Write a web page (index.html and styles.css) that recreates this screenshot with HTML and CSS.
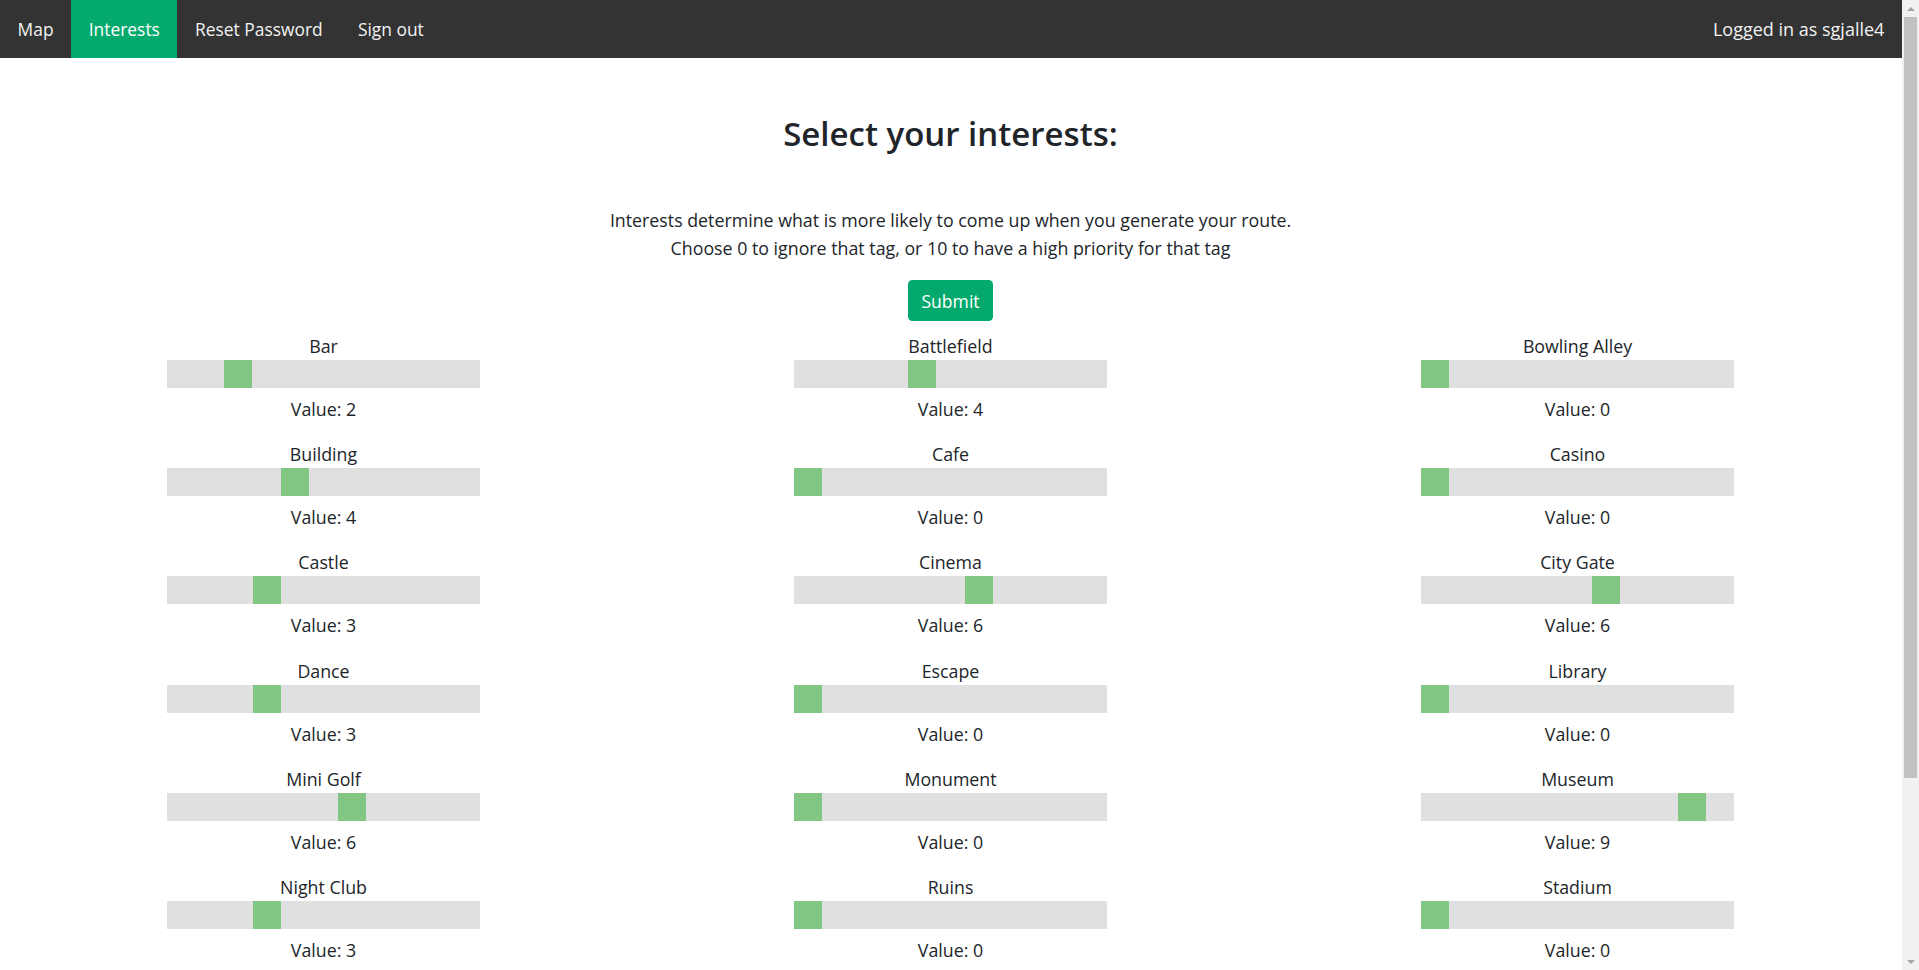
FILE: index.html
```html
<!DOCTYPE html>
<html lang="en">
<head>
<meta charset="utf-8">
<title>Interests</title>
<link rel="stylesheet" href="styles.css">
</head>
<body>
<div class="window">
  <div class="page">
    <nav class="topnav">
      <a class="nav-link" href="#">Map</a>
      <a class="nav-link active" href="#">Interests</a>
      <a class="nav-link" href="#">Reset Password</a>
      <a class="nav-link" href="#">Sign out</a>
      <span class="nav-user">Logged in as sgjalle4</span>
    </nav>
    <main class="content">
      <h2 class="title">Select your interests:</h2>
      <p class="intro">Interests determine what is more likely to come up when you generate your route.<br>Choose 0 to ignore that tag, or 10 to have a high priority for that tag</p>
      <div class="submit-row"><button class="btn-submit" type="button">Submit</button></div>
      <div class="grid">
        <div class="item"><div class="label">Bar</div><input class="slider" type="range" min="0" max="10" value="2"><div class="value">Value: 2</div></div>
        <div class="item"><div class="label">Battlefield</div><input class="slider" type="range" min="0" max="10" value="4"><div class="value">Value: 4</div></div>
        <div class="item"><div class="label">Bowling Alley</div><input class="slider" type="range" min="0" max="10" value="0"><div class="value">Value: 0</div></div>
        <div class="item"><div class="label">Building</div><input class="slider" type="range" min="0" max="10" value="4"><div class="value">Value: 4</div></div>
        <div class="item"><div class="label">Cafe</div><input class="slider" type="range" min="0" max="10" value="0"><div class="value">Value: 0</div></div>
        <div class="item"><div class="label">Casino</div><input class="slider" type="range" min="0" max="10" value="0"><div class="value">Value: 0</div></div>
        <div class="item"><div class="label">Castle</div><input class="slider" type="range" min="0" max="10" value="3"><div class="value">Value: 3</div></div>
        <div class="item"><div class="label">Cinema</div><input class="slider" type="range" min="0" max="10" value="6"><div class="value">Value: 6</div></div>
        <div class="item"><div class="label">City Gate</div><input class="slider" type="range" min="0" max="10" value="6"><div class="value">Value: 6</div></div>
        <div class="item"><div class="label">Dance</div><input class="slider" type="range" min="0" max="10" value="3"><div class="value">Value: 3</div></div>
        <div class="item"><div class="label">Escape</div><input class="slider" type="range" min="0" max="10" value="0"><div class="value">Value: 0</div></div>
        <div class="item"><div class="label">Library</div><input class="slider" type="range" min="0" max="10" value="0"><div class="value">Value: 0</div></div>
        <div class="item"><div class="label">Mini Golf</div><input class="slider" type="range" min="0" max="10" value="6"><div class="value">Value: 6</div></div>
        <div class="item"><div class="label">Monument</div><input class="slider" type="range" min="0" max="10" value="0"><div class="value">Value: 0</div></div>
        <div class="item"><div class="label">Museum</div><input class="slider" type="range" min="0" max="10" value="9"><div class="value">Value: 9</div></div>
        <div class="item"><div class="label">Night Club</div><input class="slider" type="range" min="0" max="10" value="3"><div class="value">Value: 3</div></div>
        <div class="item"><div class="label">Ruins</div><input class="slider" type="range" min="0" max="10" value="0"><div class="value">Value: 0</div></div>
        <div class="item"><div class="label">Stadium</div><input class="slider" type="range" min="0" max="10" value="0"><div class="value">Value: 0</div></div>
      </div>
    </main>
  </div>
  <div class="scrollbar">
    <div class="sb-btn"><span class="sb-arrow-up"></span></div>
    <div class="sb-track"><div class="sb-thumb"></div></div>
    <div class="sb-btn"><span class="sb-arrow-down"></span></div>
  </div>
</div>
</body>
</html>
```

FILE: styles.css
```css
html, body {
  margin: 0;
  padding: 0;
  height: 100%;
  overflow: hidden;
  background: #ffffff;
}

body {
  font-family: "Open Sans", "Noto Sans", "Liberation Sans", sans-serif;
  font-size: 17.8px;
  line-height: 28px;
  color: #212529;
}

.window {
  display: flex;
  height: 970px;
  width: 1919px;
}

.page {
  flex: 1;
  min-width: 0;
  overflow: hidden;
}

/* top navigation */
.topnav {
  display: flex;
  height: 58px;
  background: #333333;
}

.nav-link {
  display: block;
  padding: 0 17.6px;
  line-height: 58px;
  color: #f2f2f2;
  text-decoration: none;
  font-size: 17.4px;
}

.nav-link.active {
  background: #04aa6d;
  color: #ffffff;
}

.nav-user {
  margin-left: auto;
  padding: 0 17.6px;
  line-height: 58px;
  color: #f2f2f2;
  font-size: 18px;
}

/* main content */
.content {
  text-align: center;
  padding: 0 11px 0 10px;
}

.title {
  margin: 55px 0 0;
  font-size: 33px;
  line-height: 42px;
  font-weight: 600;
  color: #212529;
}

.intro {
  margin: 51px 0 0;
  line-height: 28px;
}

.submit-row {
  margin-top: 18px;
  display: flex;
  justify-content: center;
}

.btn-submit {
  height: 41px;
  padding: 0 13.2px;
  border: none;
  border-radius: 4.4px;
  background: #04aa6d;
  color: #ffffff;
  font-family: inherit;
  font-size: 17.6px;
  line-height: 42px;
  cursor: pointer;
}

/* slider grid */
.grid {
  display: grid;
  grid-template-columns: repeat(3, 1fr);
  row-gap: 16.2px;
  margin-top: 11px;
}

.item {
  display: flex;
  flex-direction: column;
  align-items: center;
}

.label {
  line-height: 28px;
}

.value {
  margin-top: 7px;
  margin-bottom: 1px;
  line-height: 28px;
}

.slider {
  -webkit-appearance: none;
  appearance: none;
  display: block;
  width: 313px;
  height: 28px;
  margin: 0;
  padding: 0;
  border: none;
  background: #d3d3d3;
  opacity: 0.7;
  outline: none;
}

.slider::-webkit-slider-thumb {
  -webkit-appearance: none;
  appearance: none;
  width: 28px;
  height: 28px;
  border: none;
  border-radius: 0;
  background: #4caf50;
  cursor: pointer;
}

.slider::-moz-range-thumb {
  width: 28px;
  height: 28px;
  border: none;
  border-radius: 0;
  background: #4caf50;
}

/* fake window scrollbar */
.scrollbar {
  width: 17px;
  background: #f1f1f1;
  display: flex;
  flex-direction: column;
}

.sb-btn {
  height: 17px;
  display: flex;
  align-items: center;
  justify-content: center;
}

.sb-arrow-up {
  width: 0;
  height: 0;
  border-left: 4px solid transparent;
  border-right: 4px solid transparent;
  border-bottom: 4px solid #a3a3a3;
}

.sb-arrow-down {
  width: 0;
  height: 0;
  border-left: 4px solid transparent;
  border-right: 4px solid transparent;
  border-top: 4px solid #a3a3a3;
}

.sb-track {
  flex: 1;
  padding: 0 2px;
}

.sb-thumb {
  height: 761px;
  background: #c1c1c1;
}
```
